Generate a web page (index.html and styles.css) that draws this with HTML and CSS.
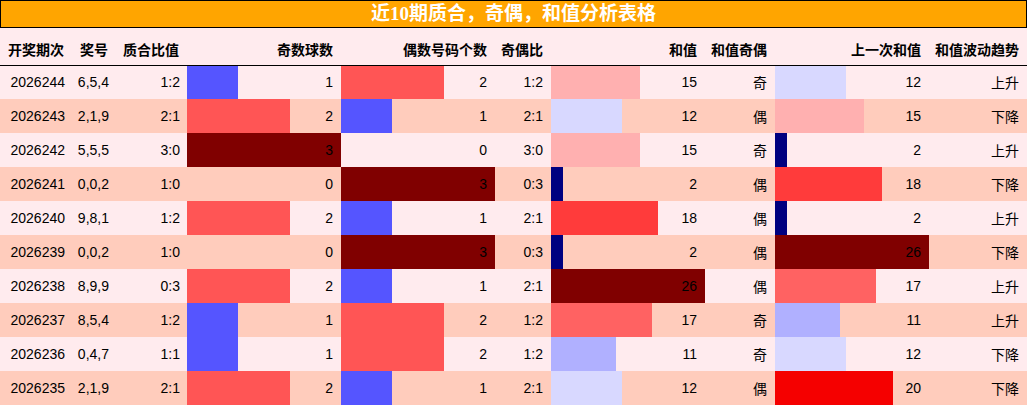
FILE: index.html
```html
<!DOCTYPE html>
<html lang="zh">
<head>
<meta charset="utf-8">
<title>近10期质合，奇偶，和值分析表格</title>
<link rel="stylesheet" href="styles.css">
</head>
<body>
<div class="sheet">
  <div class="title">近10期质合，奇偶，和值分析表格</div>
  <table class="grid">
    <colgroup>
      <col class="c-issue"><col class="c-num"><col class="c-ratio"><col class="c-bar"><col class="c-bar">
      <col class="c-oe"><col class="c-bar"><col class="c-sumoe"><col class="c-bar"><col class="c-trend">
    </colgroup>
    <thead>
      <tr>
        <th>开奖期次</th><th>奖号</th><th>质合比值</th><th>奇数球数</th><th>偶数号码个数</th>
        <th>奇偶比</th><th>和值</th><th>和值奇偶</th><th>上一次和值</th><th>和值波动趋势</th>
      </tr>
    </thead>
    <tbody>
      <tr>
        <td>2026244</td><td>6,5,4</td><td>1:2</td>
        <td class="bar" style="--w:33.333%;--c:#5555ff">1</td>
        <td class="bar" style="--w:66.667%;--c:#ff5555">2</td>
        <td>1:2</td>
        <td class="bar" style="--w:57.692%;--c:#ffb0b0">15</td>
        <td class="cjk">奇</td>
        <td class="bar" style="--w:46.154%;--c:#d8d8ff">12</td>
        <td class="cjk">上升</td>
      </tr>
      <tr>
        <td>2026243</td><td>2,1,9</td><td>2:1</td>
        <td class="bar" style="--w:66.667%;--c:#ff5555">2</td>
        <td class="bar" style="--w:33.333%;--c:#5555ff">1</td>
        <td>2:1</td>
        <td class="bar" style="--w:46.154%;--c:#d8d8ff">12</td>
        <td class="cjk">偶</td>
        <td class="bar" style="--w:57.692%;--c:#ffb0b0">15</td>
        <td class="cjk">下降</td>
      </tr>
      <tr>
        <td>2026242</td><td>5,5,5</td><td>3:0</td>
        <td class="bar" style="--w:100%;--c:#800000">3</td>
        <td class="bar" style="--w:0%;--c:transparent">0</td>
        <td>3:0</td>
        <td class="bar" style="--w:57.692%;--c:#ffb0b0">15</td>
        <td class="cjk">奇</td>
        <td class="bar" style="--w:7.692%;--c:#000080">2</td>
        <td class="cjk">上升</td>
      </tr>
      <tr>
        <td>2026241</td><td>0,0,2</td><td>1:0</td>
        <td class="bar" style="--w:0%;--c:transparent">0</td>
        <td class="bar" style="--w:100%;--c:#800000">3</td>
        <td>0:3</td>
        <td class="bar" style="--w:7.692%;--c:#000080">2</td>
        <td class="cjk">偶</td>
        <td class="bar" style="--w:69.231%;--c:#ff3b3b">18</td>
        <td class="cjk">下降</td>
      </tr>
      <tr>
        <td>2026240</td><td>9,8,1</td><td>1:2</td>
        <td class="bar" style="--w:66.667%;--c:#ff5555">2</td>
        <td class="bar" style="--w:33.333%;--c:#5555ff">1</td>
        <td>2:1</td>
        <td class="bar" style="--w:69.231%;--c:#ff3b3b">18</td>
        <td class="cjk">偶</td>
        <td class="bar" style="--w:7.692%;--c:#000080">2</td>
        <td class="cjk">上升</td>
      </tr>
      <tr>
        <td>2026239</td><td>0,0,2</td><td>1:0</td>
        <td class="bar" style="--w:0%;--c:transparent">0</td>
        <td class="bar" style="--w:100%;--c:#800000">3</td>
        <td>0:3</td>
        <td class="bar" style="--w:7.692%;--c:#000080">2</td>
        <td class="cjk">偶</td>
        <td class="bar" style="--w:100%;--c:#800000">26</td>
        <td class="cjk">下降</td>
      </tr>
      <tr>
        <td>2026238</td><td>8,9,9</td><td>0:3</td>
        <td class="bar" style="--w:66.667%;--c:#ff5555">2</td>
        <td class="bar" style="--w:33.333%;--c:#5555ff">1</td>
        <td>2:1</td>
        <td class="bar" style="--w:100%;--c:#800000">26</td>
        <td class="cjk">偶</td>
        <td class="bar" style="--w:65.385%;--c:#ff6262">17</td>
        <td class="cjk">上升</td>
      </tr>
      <tr>
        <td>2026237</td><td>8,5,4</td><td>1:2</td>
        <td class="bar" style="--w:33.333%;--c:#5555ff">1</td>
        <td class="bar" style="--w:66.667%;--c:#ff5555">2</td>
        <td>1:2</td>
        <td class="bar" style="--w:65.385%;--c:#ff6262">17</td>
        <td class="cjk">奇</td>
        <td class="bar" style="--w:42.308%;--c:#b0b0ff">11</td>
        <td class="cjk">上升</td>
      </tr>
      <tr>
        <td>2026236</td><td>0,4,7</td><td>1:1</td>
        <td class="bar" style="--w:33.333%;--c:#5555ff">1</td>
        <td class="bar" style="--w:66.667%;--c:#ff5555">2</td>
        <td>1:2</td>
        <td class="bar" style="--w:42.308%;--c:#b0b0ff">11</td>
        <td class="cjk">奇</td>
        <td class="bar" style="--w:46.154%;--c:#d8d8ff">12</td>
        <td class="cjk">下降</td>
      </tr>
      <tr>
        <td>2026235</td><td>2,1,9</td><td>2:1</td>
        <td class="bar" style="--w:66.667%;--c:#ff5555">2</td>
        <td class="bar" style="--w:33.333%;--c:#5555ff">1</td>
        <td>2:1</td>
        <td class="bar" style="--w:46.154%;--c:#d8d8ff">12</td>
        <td class="cjk">偶</td>
        <td class="bar" style="--w:76.923%;--c:#f50000">20</td>
        <td class="cjk">下降</td>
      </tr>
    </tbody>
  </table>
</div>
</body>
</html>
```

FILE: styles.css
```css
html, body {
  margin: 0;
  padding: 0;
  background: #ffffff;
}

.sheet {
  width: 1027px;
}

.title {
  height: 26px;
  border: 1px solid #000000;
  background: #ffa500;
  color: #ffffff;
  font-family: "Liberation Serif", "Noto Sans CJK SC", serif;
  font-weight: bold;
  font-size: 19px;
  line-height: 26px;
  text-align: center;
}

.grid {
  width: 1027px;
  table-layout: fixed;
  border-collapse: collapse;
  border-spacing: 0;
  font-family: "Liberation Sans", "Noto Sans CJK SC", sans-serif;
  font-size: 14px;
  color: #000000;
}

.c-issue { width: 72px; }
.c-num { width: 44px; }
.c-ratio { width: 71px; }
.c-bar { width: 154px; }
.c-oe { width: 56px; }
.c-sumoe { width: 70px; }
.c-trend { width: 98px; }

.grid th {
  height: 37px;
  padding: 5px 8px 0 0;
  box-sizing: border-box;
  background: #ffebee;
  border-bottom: 1px solid #000000;
  font-family: "Noto Sans CJK SC", sans-serif;
  font-weight: bold;
  font-size: 14px;
  text-align: right;
  white-space: nowrap;
  vertical-align: middle;
}

.grid td {
  height: 34px;
  padding: 0 8px 0 0;
  box-sizing: border-box;
  text-align: right;
  white-space: nowrap;
  vertical-align: middle;
}

.grid td:nth-child(-n+3) {
  padding-right: 7px;
}

.grid tbody tr:nth-child(odd) {
  background: #ffebee;
}

.grid tbody tr:nth-child(even) {
  background: #ffccbc;
}

.grid td.bar {
  background-image: linear-gradient(90deg, var(--c) var(--w), transparent var(--w));
  background-repeat: no-repeat;
}

.grid td.cjk {
  font-family: "Noto Sans CJK SC", sans-serif;
}
```
